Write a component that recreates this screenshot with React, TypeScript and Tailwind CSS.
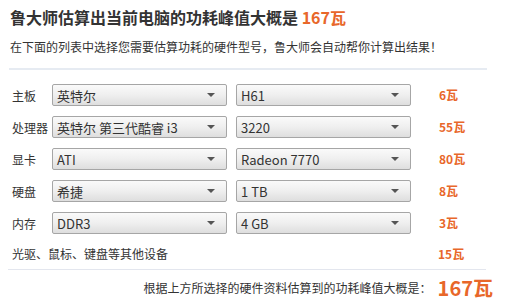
import React from 'react';

type Row = { label: string; brand: string; model: string; watt: string };

const rows: Row[] = [
  { label: '主板', brand: '英特尔', model: 'H61', watt: '6瓦' },
  { label: '处理器', brand: '英特尔 第三代酷睿 i3', model: '3220', watt: '55瓦' },
  { label: '显卡', brand: 'ATI', model: 'Radeon 7770', watt: '80瓦' },
  { label: '硬盘', brand: '希捷', model: '1 TB', watt: '8瓦' },
  { label: '内存', brand: 'DDR3', model: '4 GB', watt: '3瓦' },
];

const font = { fontFamily: '"Noto Sans CJK SC", "DejaVu Sans", sans-serif' };

const Select = ({ value }: { value: string }) => (
  <div className="flex h-[22px] w-[175px] items-center justify-between rounded-[2px] border border-[#a6a6a6] bg-gradient-to-b from-[#fafafa] via-[#efefef] to-[#dedede] pl-[4px] pr-[11px]">
    <span className="text-[13px] leading-none text-[#333]">{value}</span>
    <svg width="8" height="4" viewBox="0 0 8 4">
      <path d="M0 0 H8 L4 4 Z" fill="#555" />
    </svg>
  </div>
);

const App = () => {
  return (
    <div className="h-[308px] w-[507px] bg-white text-[#333]" style={font}>
      <div className="px-[10px] pt-[5px]">
        <h1 className="h-[24px] text-[16px] font-bold leading-[24px] text-[#333]">
          鲁大师估算出当前电脑的功耗峰值大概是 <span className="text-[#e8672a]">167瓦</span>
        </h1>
        <p className="mt-[10px] text-[12px] leading-[16px] text-[#333]">
          在下面的列表中选择您需要估算功耗的硬件型号，鲁大师会自动帮你计算出结果！
        </p>
      </div>
      <div className="mx-[9px] mt-[13px] h-[2px] w-[478px] bg-[#e6ebf2]" />
      <div className="ml-[12px] mt-[9px]">
        {rows.map((r) => (
          <div key={r.label} className="flex h-[32px] items-center">
            <span className="w-[40px] pt-[2px] text-[12px]">{r.label}</span>
            <Select value={r.brand} />
            <div className="w-[9px]" />
            <Select value={r.model} />
            <span className="ml-[28px] text-[12px] font-bold text-[#e8672a]">{r.watt}</span>
          </div>
        ))}
        <div className="flex h-[30px] items-center">
          <span className="w-[426px] text-[12px]">光驱、鼠标、键盘等其他设备</span>
          <span className="text-[12px] font-bold text-[#e8672a]">15瓦</span>
        </div>
      </div>
      <div className="ml-[8px] h-[1px] w-[478px] bg-[#e3e6ee]" />
      <div className="flex h-[36px] items-center justify-end pr-[14px]">
        <span className="text-[12px]">根据上方所选择的硬件资料估算到的功耗峰值大概是：</span>
        <span className="ml-[6px] text-[20px] font-bold leading-none text-[#e8672a]">167瓦</span>
      </div>
    </div>
  );
};

export default App;
